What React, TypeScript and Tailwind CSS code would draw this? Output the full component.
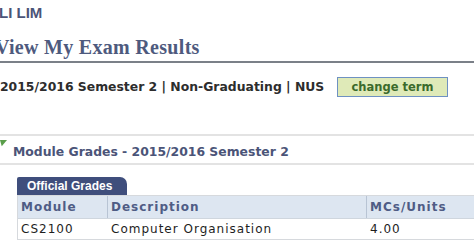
export default function App() {
  return (
    <div className="w-[474px] h-[248px] overflow-hidden bg-white font-['DejaVu_Sans',sans-serif]">
      <div className="h-[24px] pt-[4px] text-[15px] font-bold text-[#4b5478] font-['Liberation_Sans',sans-serif] leading-[18px] -ml-[1px]">
        LI LIM
      </div>
      <div className="h-[37px] pt-[12px] -ml-[5px] text-[20px] font-bold tracking-[0.3px] text-[#4e5a7e] font-['Liberation_Serif',serif] leading-[22px] whitespace-nowrap">
        View My Exam Results
      </div>
      <div className="h-[2px] bg-[#7b8088]" />
      <div className="flex items-center h-[36px] mt-[6px]">
        <span className="text-[12.4px] font-bold text-[#2d2d2d]">
          2015/2016 Semester 2 | Non-Graduating | NUS
        </span>
        <button className="ml-auto mr-[26px] w-[111px] h-[20px] bg-[#dfeab8] border border-[#6e91c2] text-[11.5px] font-bold text-[#3b6a2c] leading-[18px]">
          change term
        </button>
      </div>
      <div className="mt-[29px] border-t-2 border-b-2 border-[#e3e3e3] h-[31px] flex items-center pt-[6px]">
        <svg width="7" height="7" viewBox="0 0 8 8" className="self-start -mt-[2px] mr-[6px]">
          <polygon points="0,0 8,0 2,7" fill="#5a9e4a" />
        </svg>
        <span className="text-[12.4px] font-bold text-[#4b5478]">
          Module Grades - 2015/2016 Semester 2
        </span>
      </div>
      <div className="pl-[17px] pt-[12px]">
        <div className="w-[110px] h-[18px] bg-[#3f4e7c] rounded-tr-[7px] rounded-tl-[2px] text-white font-bold text-[12px] font-['Liberation_Sans',sans-serif] leading-[18px] pl-[10px]">
          Official Grades
        </div>
        <div className="border border-[#d6d9dd] w-[480px]">
          <div className="flex h-[23px] bg-[#dde6f1] border-b border-[#cfd6de] text-[12px] font-bold text-[#4f5c85] tracking-[1px] leading-[23px]">
            <div className="w-[90px] pl-[3px] border-r border-[#b8c4d4]">Module</div>
            <div className="w-[259px] pl-[3px] border-r border-[#b8c4d4]">Description</div>
            <div className="flex-1 pl-[3px]">MCs/Units</div>
          </div>
          <div className="flex h-[20px] text-[12px] text-[#1e1e1e] tracking-[1px] leading-[20px]">
            <div className="w-[90px] pl-[3px]">CS2100</div>
            <div className="w-[259px] pl-[3px]">Computer Organisation</div>
            <div className="flex-1 pl-[3px]">4.00</div>
          </div>
        </div>
      </div>
    </div>
  );
}
